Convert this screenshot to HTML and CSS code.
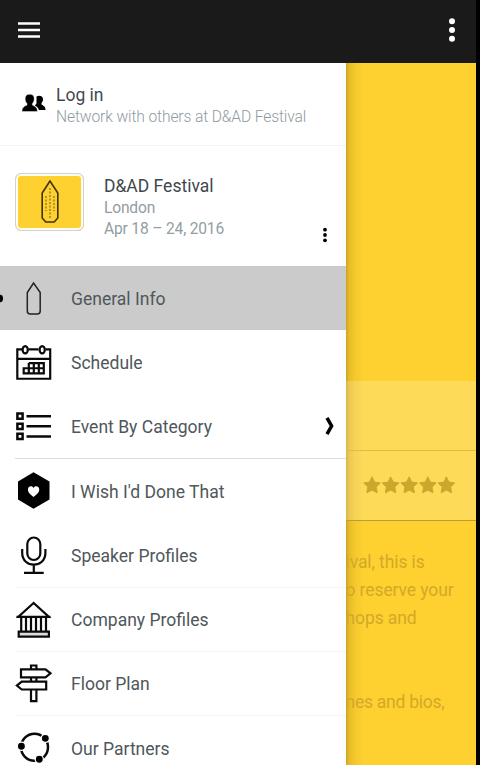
FILE: index.html
```html
<!DOCTYPE html>
<html lang="en">
<head>
<meta charset="utf-8">
<title>D&amp;AD Festival</title>
<link rel="stylesheet" href="styles.css">
</head>
<body>
<div class="screen">
  <header class="topbar">
    <svg class="hamburger" viewBox="0 0 22 16"><path d="M0 1.5h22M0 8h22M0 14.5h22" stroke="#fff" stroke-width="2.6"/></svg>
    <svg class="overflow" viewBox="0 0 8 24"><g fill="#fff"><circle cx="4" cy="3.2" r="3"/><circle cx="4" cy="12" r="3"/><circle cx="4" cy="20.8" r="3"/></g></svg>
  </header>
  <div class="body">
    <nav class="drawer">
      <section class="login">
        <svg class="people" viewBox="22 94 24 18"><path d="M36.500 96.500c2-1.500 6.200-1.200 6.500 2.200.2 2-.6 3.300-1.500 4.300v1.500c1.500 1 3.900 1.500 4.100 5.500h-6.700c-.5-2.500-2.500-3.500-4-4.500l1.600-2z"/><path d="M29.700 94.300c3.300 0 4.800 2 4.500 4.900-.1 2-.9 3.200-1.800 4.200v1.700c2 1.100 5 1.800 5 6.400H22c0-4.600 3-5.300 5-6.400v-1.700c-1-1-1.700-2.200-1.800-4.200-.3-2.900 1.200-4.900 4.500-4.900z" stroke="#fff" stroke-width=".4"/></svg>
        <div class="login-text"><div class="login-title">Log in</div><div class="login-sub">Network with others at D&amp;AD Festival</div></div>
      </section>
      <section class="event">
        <div class="thumb"><svg viewBox="0 0 18 43"><path d="M9 1 1.200 13v25l3.600 4h8.400l3.600-4V13z" fill="none" stroke="#40330c" stroke-width="1.600"/><path d="M9 8v31M5 16v15M13 16v15" fill="none" stroke="#a18320" stroke-width="1.500" stroke-dasharray="2 1.500"/></svg></div>
        <div class="event-text"><div class="event-title">D&amp;AD Festival</div><div class="event-meta">London</div><div class="event-meta">Apr 18 – 24, 2016</div></div>
        <svg class="event-more" viewBox="0 0 6 16"><circle cx="3" cy="2.700" r="1.900"/><circle cx="3" cy="8" r="1.900"/><circle cx="3" cy="13.300" r="1.900"/></svg>
      </section>
      <ul class="menu">
        <li class="item active">
          <svg viewBox="0 265.500 71 64.250"><circle cx="-.7" cy="298" r="3.800"/><path d="M33.600 282.500 27.300 292v18.500q0 3 3 3h6.900q3 0 3-3V292z" fill="none" stroke="#222" stroke-width="1.500"/></svg><span>General Info</span></li>
        <li class="item">
          <svg viewBox="0 329.750 71 64.250"><g fill="none" stroke="#0a0a0a" stroke-width="2.200"><path d="M22 349.200h-4.700V378.500h32.900V349.200h-4.700M28.500 349.200h10M17.300 358.700h32.900"/><ellipse cx="25.200" cy="349.500" rx="2.600" ry="3.700"/><ellipse cx="42.200" cy="349.500" rx="2.600" ry="3.700"/><path d="M28.800 362.800h15v10.400H23.700V368h20.100M28.800 362.800v10.400M33.800 362.800v10.400M38.800 362.800v10.400"/></g></svg><span>Schedule</span></li>
        <li class="item">
          <svg viewBox="0 394 71 64.250"><g fill="none" stroke="#0a0a0a" stroke-width="2.500"><path d="M17.400 413.600h5.200v5.200h-5.200zM17.400 423.700h5.200v5.200h-5.200zM17.400 433.800h5.200v5.200h-5.200z"/><path d="M26.500 416.200H51M26.500 426.300H51M26.500 436.400H51"/></g></svg><span>Event By Category</span>
          <svg class="chevron" viewBox="0 0 10 20"><path d="M2 1.800 6.600 10 2 18.200" fill="none" stroke="#000" stroke-width="3.500"/></svg></li>
        <li class="item line">
          <svg viewBox="0 458.250 71 64.250"><path d="M33.500 472.500 49.500 481.700v18L33.500 509 18 499.700v-18z"/><path d="M33.500 497.300c-3-2.300-5.600-4.600-5.600-7.300 0-4 4.400-4.500 5.600-1.800 1.200-2.700 5.800-2.200 5.800 1.800 0 2.700-2.800 5-5.800 7.300z" fill="#fff"/></svg><span>I Wish I'd Done That</span></li>
        <li class="item">
          <svg viewBox="0 522.500 71 64.250"><g fill="none" stroke="#0a0a0a" stroke-width="2.200"><rect x="27.300" y="537" width="13" height="22.500" rx="6.500"/><path d="M22.200 548.500v4c0 15.500 23.200 15.500 23.200 0v-4M33.800 564.500v7.800M24 572.300h19.700"/></g></svg><span>Speaker Profiles</span></li>
        <li class="item faint">
          <svg viewBox="0 586.750 71 64.250"><g fill="none" stroke="#0a0a0a" stroke-width="2.200"><path d="M33.600 602.800 18.500 616.500h30.200zM16.500 616.700h34M21.200 617v14M46 617v14M26 617v14M31 617v14M36 617v14M41 617v14"/><path d="M18.700 631.300h30.200v5H18.700z" fill="#ddd"/></g></svg><span>Company Profiles</span></li>
        <li class="item faint">
          <svg viewBox="0 651 71 64.250"><g fill="#fff" stroke="#0a0a0a" stroke-width="2.200"><path d="M31 665.500h5.400v35.700H31z"/><path d="M21 669.300h24.500l5 4-5 4H21zM46.200 681.700H21.700l-4.800 3.900 4.800 3.900h24.500z"/></g></svg><span>Floor Plan</span></li>
        <li class="item faint">
          <svg viewBox="0 715.250 71 64.250"><circle cx="34.500" cy="747.500" r="13.500" fill="none" stroke="#0a0a0a" stroke-width="2.500"/><g stroke="#fff" stroke-width="1.300"><circle cx="45.300" cy="738.600" r="4.100"/><circle cx="21.400" cy="746.500" r="4.100"/><circle cx="39.300" cy="759.500" r="4.100"/></g></svg><span>Our Partners</span></li>
      </ul>
    </nav>
    <main class="page">
      <div class="band"></div>
      <div class="rating">
        <svg viewBox="0 0 92 18"><defs><path id="star" d="m9 .8 2.600 5.300 5.700.8-4.100 4.100 1 5.800L9 14.100l-5.200 2.700 1-5.800L.7 6.900l5.700-.8z" stroke-width="1" stroke-linejoin="round"/></defs><g fill="#cda72c" stroke="#cda72c"><use href="#star"/><use href="#star" x="18.600"/><use href="#star" x="37.200"/><use href="#star" x="55.800"/><use href="#star" x="74.400"/></g></svg>
      </div>
      <div class="copy"><p>ival, this is<br>o reserve your<br>hops and</p><p>nes and bios,</p></div>
    </main>
  </div>
</div>
</body>
</html>
```

FILE: styles.css
```css
* { box-sizing: border-box; }
body { margin: 0; background: #000; font-family: Roboto, sans-serif; }
.screen { width: 476px; height: 765px; overflow: hidden; display: flex; flex-direction: column; background: #fed130; }
.topbar { height: 62.5px; flex: none; background: #1a1a1a; display: flex; justify-content: space-between; align-items: center; padding: 0 20px 2px 18px; }
.hamburger { width: 22px; height: 16px; }
.overflow { width: 8px; height: 24px; }
.body { flex: 1; min-height: 0; display: grid; grid-template-columns: 345.5px 1fr; }
.drawer { background: #fff; overflow: hidden; display: flex; flex-direction: column; min-height: 0; }
.login { height: 83px; flex: none; display: flex; padding: 20px 0 0 22px; border-bottom: 1px solid #f3f5f5; }
.people { width: 24px; height: 18px; margin: 11px 10px 0 0; flex: none; }
.login-text, .event-text { white-space: nowrap; }
.login-title { font-size: 17.5px; line-height: 24px; color: #3f4a50; }
.login-sub { font-size: 15.6px; letter-spacing: -.12px; line-height: 20px; font-weight: 300; color: #8f9a9f; }
.event { height: 120px; flex: none; display: flex; padding: 28px 17.5px 0 15px; }
.thumb { width: 69px; height: 58px; margin-top: -1px; border: 1px solid #d2d2ce; border-radius: 6px; background: #fed130; box-shadow: inset 0 0 0 2px #fffdf3; display: flex; justify-content: center; align-items: center; flex: none; }
.thumb svg { width: 18px; height: 43px; }
.event-text { margin-left: 20px; padding-top: 1px; flex: 1; }
.event-title { font-size: 17.5px; line-height: 22px; color: #3f474c; }
.event-meta { font-size: 15.6px; letter-spacing: -.18px; line-height: 21px; color: #929da3; position: relative; top: 1px; }
.event-more { width: 6px; height: 16px; margin-top: 53px; }
.menu { list-style: none; margin: 0; padding: 0; }
.item { height: 64.25px; display: flex; align-items: center; font-size: 17.55px; color: #4f575b; white-space: nowrap; }
.item > svg:first-child { width: 71px; height: 64.25px; flex: none; }
.item span { flex: 1; padding-top: 2.5px; }
.active { background: #cbcbcb; }
.line, .faint { background: linear-gradient(#dcdfdf, #dcdfdf) 15px 0 / 331px 1px no-repeat; }
.faint { background-image: linear-gradient(#f2f3f3, #f2f3f3); }
.item .chevron { width: 10px; height: 20px; margin-right: 10.5px; }
.page { overflow: hidden; background: linear-gradient(90deg, rgba(90, 65, 0, .3), rgba(90, 65, 0, .15) 3px, rgba(90, 65, 0, .06) 9px, rgba(90, 65, 0, 0) 18px); padding-top: 318px; }
.band { height: 70px; background: rgba(255, 255, 255, .2); border-bottom: 1px solid #dfbb48; }
.rating { height: 70px; background: rgba(255, 255, 255, .2); border-bottom: 1px solid #bd9d32; display: flex; align-items: center; padding-left: 17.5px; }
.rating svg { width: 92px; height: 18px; }
.copy { font-size: 17.5px; letter-spacing: -.1px; line-height: 28px; color: #d3a828; padding-top: 27.5px; white-space: nowrap; }
.copy p { margin: 0 0 56px; }
.copy p:last-child { letter-spacing: -.25px; }
```
